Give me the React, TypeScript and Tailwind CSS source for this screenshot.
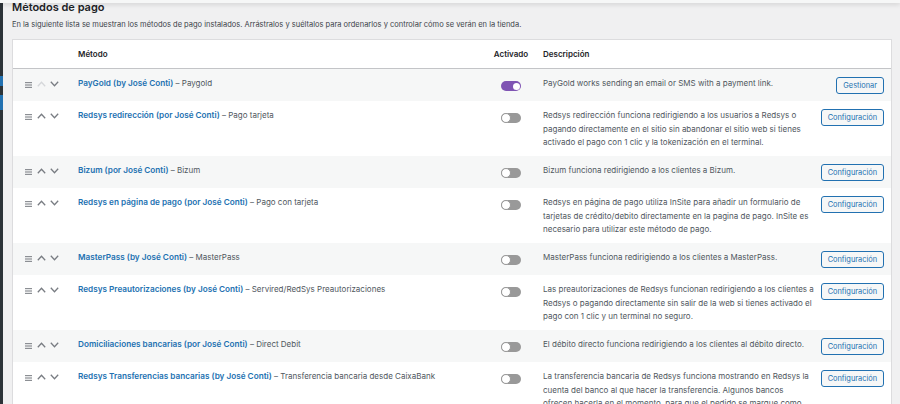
import React from "react";

type Row = {
  name: string;
  sub: string;
  desc: string[];
  on?: boolean;
  btn: string;
  firstDisabled?: boolean;
};

const rows: Row[] = [
  { name: "PayGold (by José Conti)", sub: "Paygold", desc: ["PayGold works sending an email or SMS with a payment link."], on: true, btn: "Gestionar", firstDisabled: true },
  { name: "Redsys redirección (por José Conti)", sub: "Pago tarjeta", desc: ["Redsys redirección funciona redirigiendo a los usuarios a Redsys o", "pagando directamente en el sitio sin abandonar el sitio web si tienes", "activado el pago con 1 clic y la tokenización en el terminal."], btn: "Configuración" },
  { name: "Bizum (por José Conti)", sub: "Bizum", desc: ["Bizum funciona redirigiendo a los clientes a Bizum."], btn: "Configuración" },
  { name: "Redsys en página de pago (por José Conti)", sub: "Pago con tarjeta", desc: ["Redsys en página de pago utiliza InSite para añadir un formulario de", "tarjetas de crédito/debito directamente en la pagina de pago. InSite es", "necesario para utilizar este método de pago."], btn: "Configuración" },
  { name: "MasterPass (by José Conti)", sub: "MasterPass", desc: ["MasterPass funciona redirigiendo a los clientes a MasterPass."], btn: "Configuración" },
  { name: "Redsys Preautorizaciones (by José Conti)", sub: "Servired/RedSys Preautorizaciones", desc: ["Las preautorizaciones de Redsys funcionan redirigiendo a los clientes a", "Redsys o pagando directamente sin salir de la web si tienes activado el", "pago con 1 clic y un terminal no seguro."], btn: "Configuración" },
  { name: "Domiciliaciones bancarias (por José Conti)", sub: "Direct Debit", desc: ["El débito directo funciona redirigiendo a los clientes al débito directo."], btn: "Configuración" },
  { name: "Redsys Transferencias bancarias (by José Conti)", sub: "Transferencia bancaria desde CaixaBank", desc: ["La transferencia bancaria de Redsys funciona mostrando en Redsys la", "cuenta del banco al que hacer la transferencia. Algunos bancos", "ofrecen hacerla en el momento, para que el pedido se marque como"], btn: "Configuración" },
];

function Handle() {
  return (
    <svg width="7" height="6" viewBox="0 0 7 6" className="block">
      <rect x="0" y="0" width="7" height="1.2" fill="#8c8f94" />
      <rect x="0" y="2.4" width="7" height="1.2" fill="#8c8f94" />
      <rect x="0" y="4.8" width="7" height="1.2" fill="#8c8f94" />
    </svg>
  );
}

function Chevron({ up, disabled }: { up?: boolean; disabled?: boolean }) {
  return (
    <svg width="9" height="6" viewBox="0 0 9 6" className="block">
      <path
        d={up ? "M0.8 5.2 L4.5 1.3 L8.2 5.2" : "M0.8 0.8 L4.5 4.7 L8.2 0.8"}
        fill="none"
        stroke={disabled ? "#d5d7da" : "#787c82"}
        strokeWidth="1.3"
      />
    </svg>
  );
}

function Toggle({ on }: { on?: boolean }) {
  return on ? (
    <div className="w-[20px] h-[10px] rounded-full bg-[#7f54b3] flex items-center justify-end pr-[1.5px]">
      <div className="w-[7px] h-[7px] rounded-full bg-white" />
    </div>
  ) : (
    <div className="w-[20px] h-[10px] rounded-full bg-[#999999] flex items-center justify-start">
      <div className="w-[10px] h-[10px] rounded-full bg-white border border-[#999999]" />
    </div>
  );
}

export default function App() {
  return (
    <div
      className="w-[900px] h-[404px] overflow-hidden bg-[#f0f0f1] flex relative"
      style={{ fontFamily: "Inter, 'Noto Sans', sans-serif" }}
    >
      <div className="absolute left-0 top-0 w-full h-[3px] bg-[#f6f7f7] shadow-[0_1px_5px_rgba(0,0,0,0.18)] z-10" />
      <div className="w-[3px] shrink-0 bg-[#2c3338] flex flex-col">
        <div className="h-[76px]" />
        <div className="h-[10px] bg-[#2271b1]" />
        <div className="h-[9px]" />
        <div className="h-[15px] bg-[#2271b1]" />
      </div>
      <div className="flex-1 pl-[9px] pr-[8px] pt-[1px]">
        <div className="text-[11px] font-semibold text-[#1d2327] leading-[13px] h-[13px]">Métodos de pago</div>
        <div className="text-[7.5px] text-[#3c434a] mt-[6px] leading-[10px]">
          En la siguiente lista se muestran los métodos de pago instalados. Arrástralos y suéltalos para ordenarlos y controlar cómo se verán en la tienda.
        </div>
        <div className="mt-[9px] bg-white border border-[#dcdcde] w-[880px]">
          <div className="flex h-[29px] items-center border-b border-[#c3c4c7] text-[8px] font-semibold text-[#1d2327]">
            <div className="w-[57px] shrink-0" />
            <div className="w-[416px] shrink-0 pl-[8px]">Método</div>
            <div className="w-[50px] shrink-0 text-center">Activado</div>
            <div className="w-[280px] shrink-0 pl-[7px]">Descripción</div>
            <div className="flex-1" />
          </div>
          {rows.map((r, i) => (
            <div
              key={i}
              className={`flex py-[8px] text-[8px] leading-[13.5px] ${i % 2 === 0 ? "bg-[#f6f7f7]" : "bg-white"} ${r.desc.length === 1 ? "h-[32px]" : "h-[55px]"}`}
            >
              <div className="w-[57px] shrink-0 pl-[12px] flex items-start gap-[5px] pt-[4.5px]">
                <Handle />
                <div className="-mt-[0.5px] flex gap-[4px]">
                  <Chevron up disabled={r.firstDisabled} />
                  <Chevron />
                </div>
              </div>
              <div className="w-[416px] shrink-0 pl-[8px] whitespace-nowrap">
                <span className="font-semibold text-[8.2px] text-[#2271b1]">{r.name}</span>
                <span className="text-[#50575e]"> – {r.sub}</span>
              </div>
              <div className="w-[50px] shrink-0 flex justify-center pt-[4px]">
                <Toggle on={r.on} />
              </div>
              <div className="w-[280px] shrink-0 pl-[7px] text-[#50575e] whitespace-nowrap">
                {r.desc.map((l, j) => (
                  <div key={j}>{l}</div>
                ))}
              </div>
              <div className="flex-1 flex justify-end pr-[7px]">
                <div className="h-[17px] px-[6px] flex items-center rounded-[3px] border border-[#2271b1] bg-[#f6f7f7] text-[#2271b1] text-[7.4px] leading-none">
                  {r.btn}
                </div>
              </div>
            </div>
          ))}
        </div>
      </div>
    </div>
  );
}
